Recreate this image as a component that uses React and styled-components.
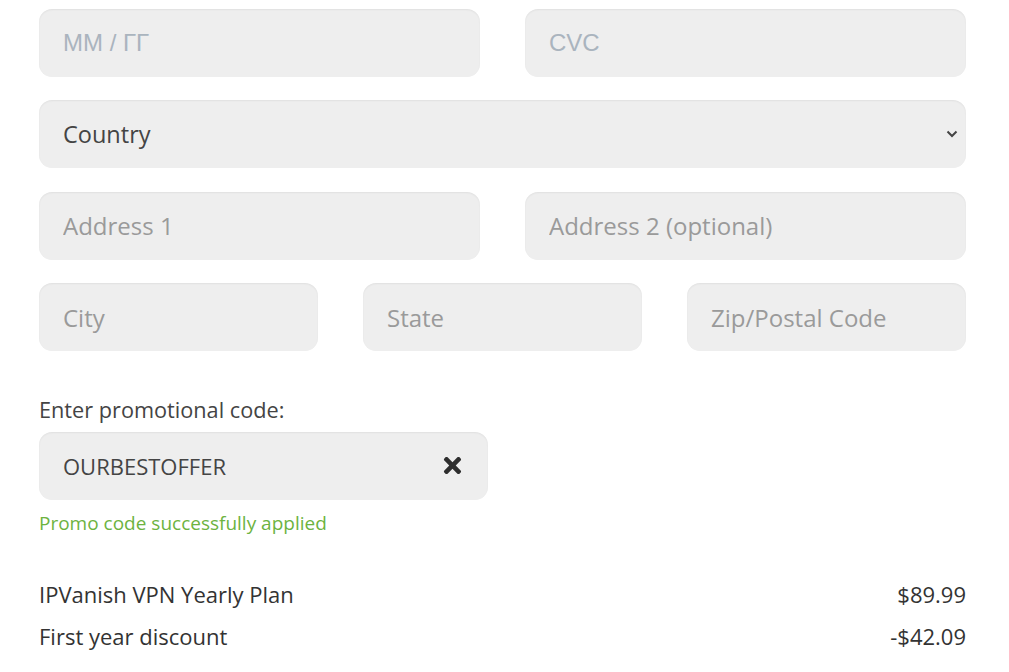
import styled, { createGlobalStyle } from "styled-components";
import { FaTimes } from "react-icons/fa";

const GlobalStyle = createGlobalStyle`
  html, body {
    margin: 0;
    padding: 0;
    background: #ffffff;
    font-family: "Open Sans", "Noto Sans", sans-serif;
  }
`;

const App = () => {
  return (
    <>
      <GlobalStyle />
      <Page>
        <Row cols={2}>
          <Field placeholder="ММ / ГГ" card />
          <Field placeholder="CVC" card />
        </Row>
        <Row cols={1}>
          <SelectWrap>
            <Select defaultValue="">
              <option value="">Country</option>
            </Select>
            <Chevron width="12" height="8" viewBox="0 0 12 8">
              <path d="M1.5 1.5 L6 6 L10.5 1.5" fill="none" stroke="#444" strokeWidth="2" />
            </Chevron>
          </SelectWrap>
        </Row>
        <Row cols={2}>
          <Field placeholder="Address 1" />
          <Field placeholder="Address 2 (optional)" />
        </Row>
        <Row cols={3}>
          <Field placeholder="City" />
          <Field placeholder="State" />
          <Field placeholder="Zip/Postal Code" />
        </Row>

        <Promo>
          <Label>Enter promotional code:</Label>
          <PromoBox>
            <PromoInput defaultValue="OURBESTOFFER" />
            <ClearButton type="button">
              <FaTimes />
            </ClearButton>
          </PromoBox>
          <Success>Promo code successfully applied</Success>
        </Promo>

        <Summary>
          <Line>
            <span>IPVanish VPN Yearly Plan</span>
            <span>$89.99</span>
          </Line>
          <Line>
            <span>First year discount</span>
            <span>-$42.09</span>
          </Line>
        </Summary>
      </Page>
    </>
  );
};

export default App;

const Page = styled.div`
  width: 927px;
  padding: 9px 0 0 39px;
  display: flex;
  flex-direction: column;
  gap: 23.4px;
`;

const Row = styled.div`
  display: grid;
  grid-template-columns: repeat(${(props) => props.cols}, 1fr);
  column-gap: 45px;
`;

const Field = styled.input`
  box-sizing: border-box;
  height: 68px;
  width: 100%;
  border: none;
  border-radius: 13px;
  background: #eeeeee;
  box-shadow: inset 0 1px 2px rgba(0, 0, 0, 0.06);
  padding: 0 24px;
  font-family: ${(props) =>
    props.card ? '"Liberation Sans", Arial, sans-serif' : '"Open Sans", sans-serif'};
  font-size: 24px;
  color: #444;
  outline: none;

  &::placeholder {
    color: ${(props) => (props.card ? "#aab4be" : "#9a9a9a")};
  }
`;

const SelectWrap = styled.div`
  position: relative;
`;

const Select = styled.select`
  box-sizing: border-box;
  height: 68px;
  width: 100%;
  border: none;
  border-radius: 13px;
  background: #eeeeee;
  box-shadow: inset 0 1px 2px rgba(0, 0, 0, 0.06);
  padding: 0 24px;
  font-family: "Open Sans", sans-serif;
  font-size: 23.5px;
  color: #444;
  appearance: none;
  outline: none;
`;

const Chevron = styled.svg`
  position: absolute;
  right: 8px;
  top: 30px;
  pointer-events: none;
`;

const Promo = styled.div`
  display: flex;
  flex-direction: column;
  margin-top: 21px;
`;

const Label = styled.div`
  font-size: 21.7px;
  color: #444;
  line-height: 28px;
  margin-bottom: 8px;
`;

const PromoBox = styled.div`
  box-sizing: border-box;
  width: 449px;
  height: 68px;
  border-radius: 13px;
  background: #eeeeee;
  box-shadow: inset 0 1px 2px rgba(0, 0, 0, 0.06);
  display: flex;
  align-items: center;
  padding: 0 24px;
`;

const PromoInput = styled.input`
  flex: 1;
  border: none;
  background: transparent;
  font-family: "Open Sans", sans-serif;
  font-size: 22px;
  color: #444;
  outline: none;
  padding: 0;
`;

const ClearButton = styled.button`
  border: none;
  background: transparent;
  padding: 0;
  display: flex;
  color: #2e2e2e;
  font-size: 25px;
  margin-right: -1px;
`;

const Success = styled.div`
  margin-top: 10px;
  font-size: 19px;
  color: #6db33f;
  line-height: 26px;
`;

const Summary = styled.div`
  display: flex;
  flex-direction: column;
  gap: 11px;
  margin-top: 20px;
`;

const Line = styled.div`
  display: flex;
  justify-content: space-between;
  font-size: 22px;
  line-height: 31px;
  color: #333;
`;
